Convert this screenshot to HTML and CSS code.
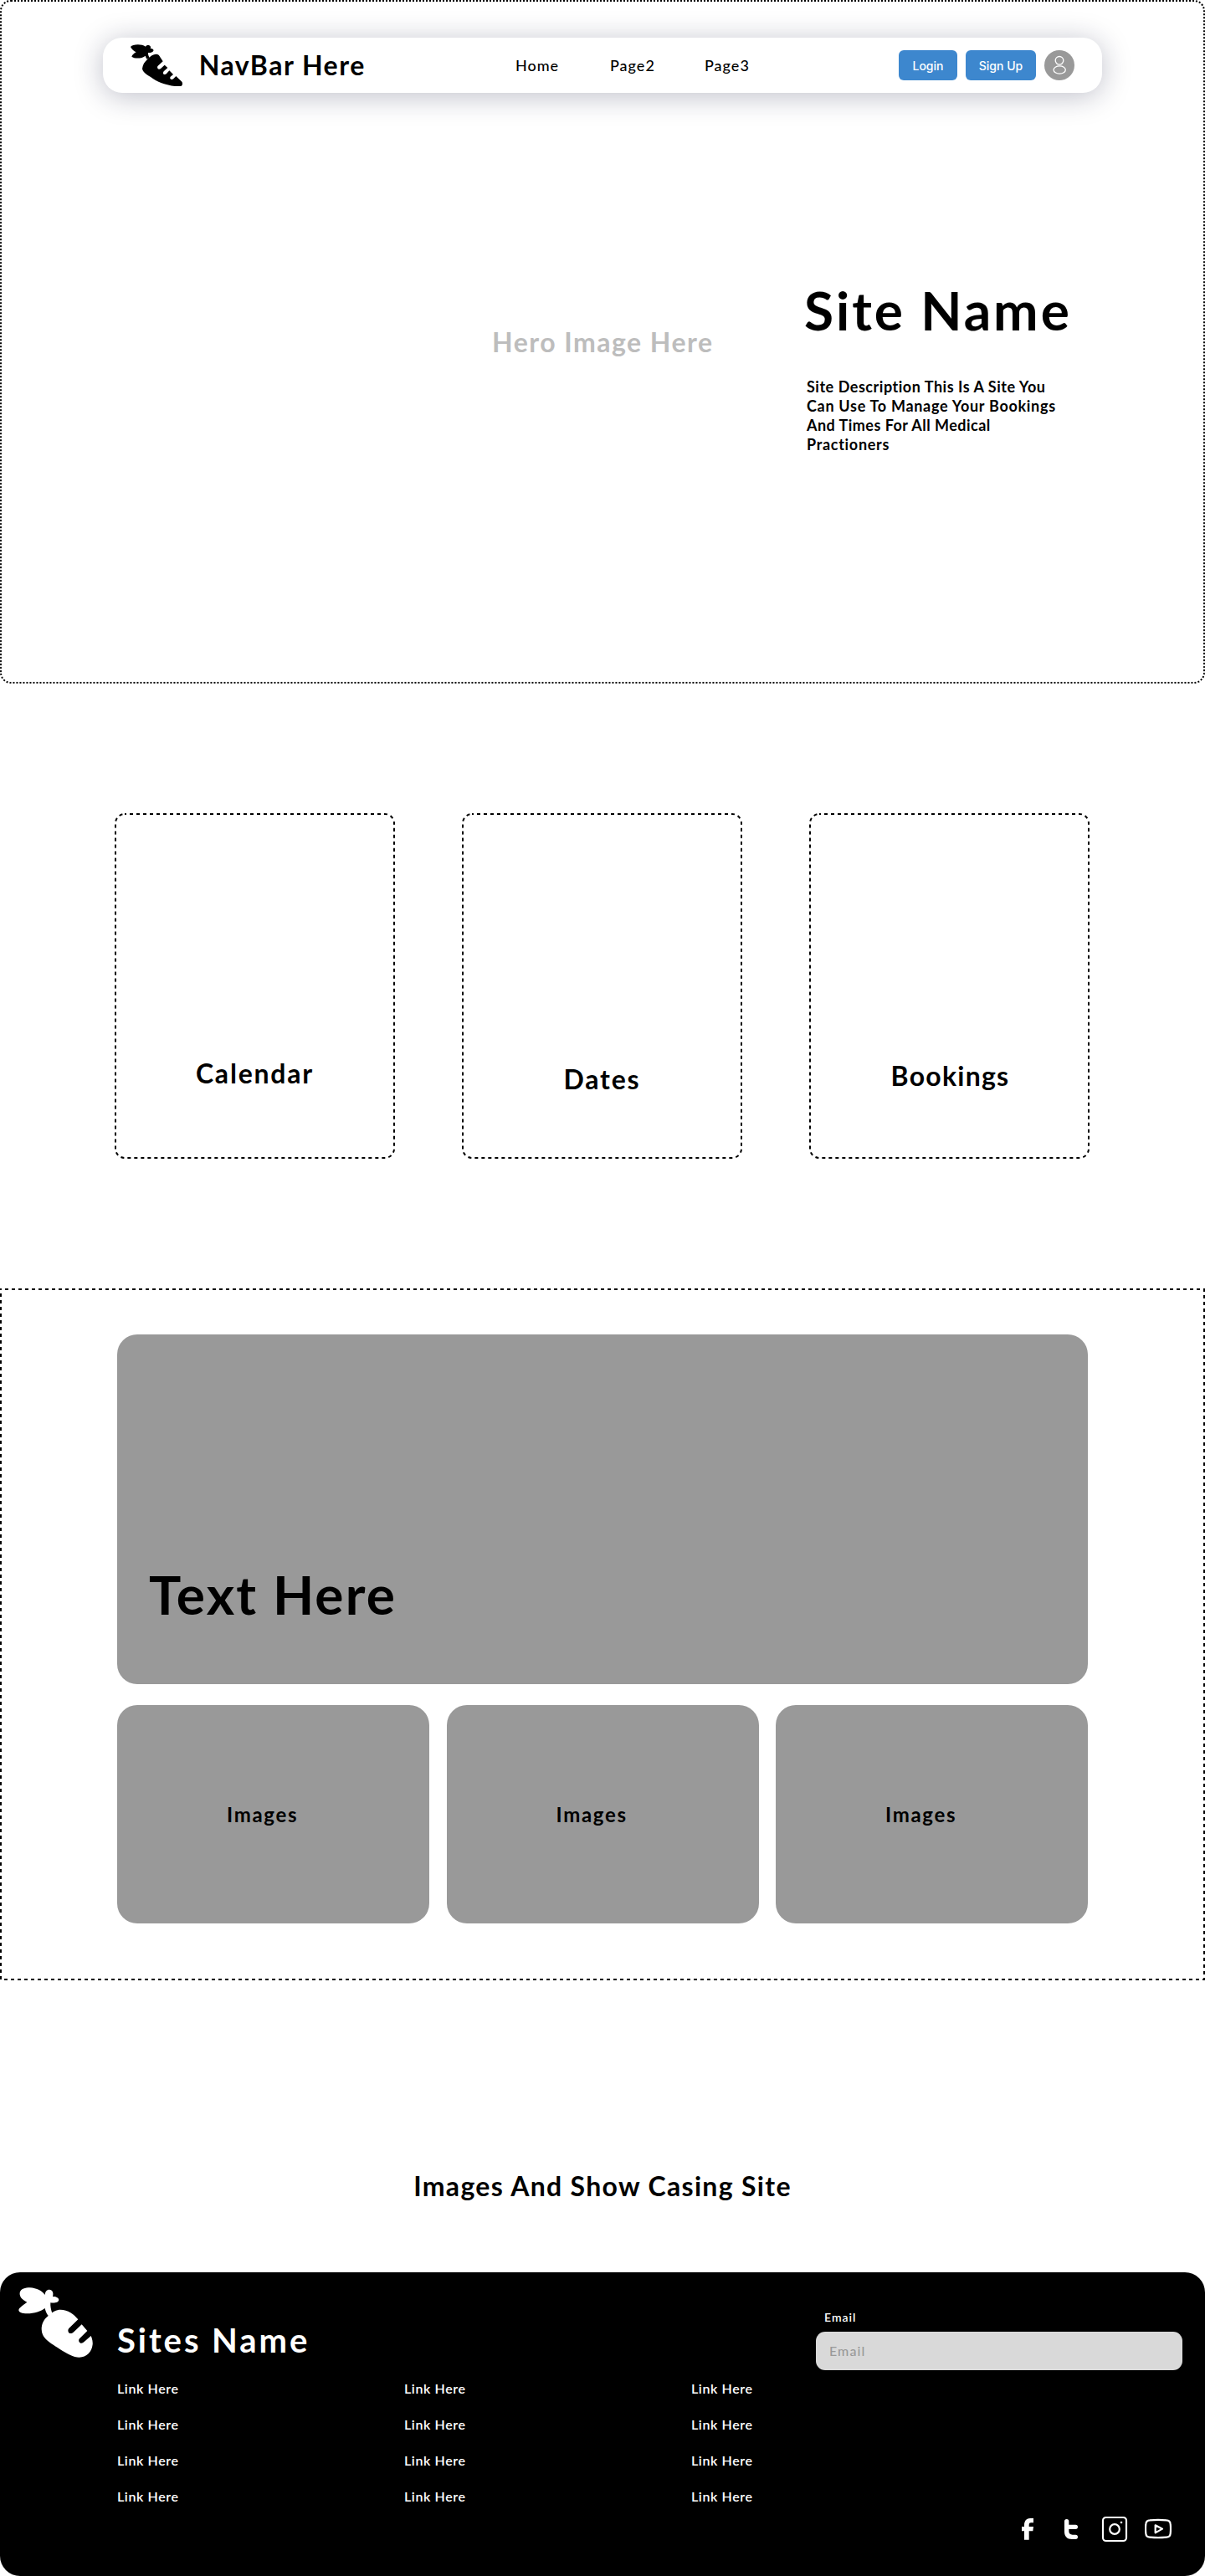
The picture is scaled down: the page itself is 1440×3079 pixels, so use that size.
FILE: index.html
```html
<!DOCTYPE html>
<html lang="en">
<head>
<meta charset="utf-8">
<title>Site Name</title>
<link rel="stylesheet" href="styles.css">
</head>
<body>
<header class="hero">
  <svg class="outline" width="1440" height="817" aria-hidden="true"><rect x="1" y="1" width="1438" height="815" rx="12" stroke-dasharray="2 2"/></svg>
  <nav class="navbar">
    <div class="brand">
      <svg class="brand-logo" viewBox="168 98 188 152" aria-hidden="true">
        <path d="M168 107C175 98 205 95 222 106C224 101 234 99 239 105C241 109 240 112 238 114C244 111 252 116 250 121C248 126 238 129 231 128C230 135 234 142 236 147L227 151C223 146 222 142 221 139C210 149 183 151 172 142C174 136 181 130 188 126C180 122 172 116 168 107Z"/>
        <path d="M228 152C240 139 250 133 259 133C267 133 272 138 275 145L284 159L266 175C262 180 265 187 270 187C273 187 275 186 277 184L290 172L301 182L287 195C283 200 285 206 290 206C293 206 295 205 297 203L307 192L321 206L311 214C308 218 310 224 315 224C318 224 320 223 322 221L331 212L352 232C356 238 354 248 345 249C310 249 265 236 240 215C222 205 211 195 210 185C212 170 218 162 228 152Z"/>
      </svg>
      <span class="brand-name">NavBar Here</span>
    </div>
    <div class="nav-links"><a>Home</a><a>Page2</a><a>Page3</a></div>
    <div class="nav-actions">
      <button class="btn btn-login">Login</button>
      <button class="btn btn-signup">Sign Up</button>
      <svg class="avatar" viewBox="0 0 36 36" aria-hidden="true"><circle class="avatar-bg" cx="18" cy="18" r="18"/><circle cx="18" cy="12.3" r="4.8"/><ellipse cx="18.2" cy="23.5" rx="7.1" ry="4.6"/></svg>
    </div>
  </nav>
  <div class="hero-body">
    <p class="hero-label">Hero Image Here</p>
    <div class="hero-copy">
      <h1>Site Name</h1>
      <p class="description"><span class="tight">Site Description This Is A Site You</span><br>Can Use To Manage Your Bookings<br><span class="tighter">And Times For All Medical</span><br>Practioners</p>
    </div>
  </div>
</header>

<section class="features">
  <article class="feature calendar"><svg class="outline" width="335" height="413" aria-hidden="true"><rect x="1" y="1" width="333" height="411" rx="11" stroke-dasharray="4 4" stroke-dashoffset="2"/></svg><h2>Calendar</h2></article>
  <article class="feature dates"><svg class="outline" width="335" height="413" aria-hidden="true"><rect x="1" y="1" width="333" height="411" rx="11" stroke-dasharray="4 4" stroke-dashoffset="2"/></svg><h2>Dates</h2></article>
  <article class="feature bookings"><svg class="outline" width="335" height="413" aria-hidden="true"><rect x="1" y="1" width="333" height="411" rx="11" stroke-dasharray="4 4" stroke-dashoffset="2"/></svg><h2>Bookings</h2></article>
</section>

<section class="gallery">
  <svg class="outline" width="1440" height="827" aria-hidden="true"><rect x="1" y="1" width="1438" height="825" stroke-dasharray="4 4" stroke-dashoffset="3"/></svg>
  <div class="banner"><h2>Text Here</h2></div>
  <div class="tiles">
    <div class="tile">Images</div>
    <div class="tile">Images</div>
    <div class="tile">Images</div>
  </div>
</section>

<h2 class="showcase">Images And Show Casing Site</h2>

<footer class="footer">
  <svg class="footer-logo" viewBox="67 133 267 252" aria-hidden="true">
    <path d="M98 186C80 178 70 166 72 152C75 138 92 134 108 134C133 135 153 147 162 160C163 148 168 141 178 141C189 142 194 152 190 166C202 165 212 171 212 178C211 187 198 190 182 188C181 202 184 213 187 222L187 230L174 235C167 227 164 216 162 208C148 218 125 227 98 227C80 227 69 223 68 215C68 206 85 196 98 186Z"/>
    <path d="M174 235C190 219 203 213 218 213C244 213 267 230 281 248L248 280C243 285 245 294 250 297C254 299 260 298 264 294L294 266L314 289L286 317C281 323 284 331 290 333C295 334 299 332 302 329L327 307C332 318 334 328 333 338C330 365 312 384 285 384C265 384 240 370 215 354C185 334 150 318 150 283C150 262 160 246 174 235Z"/>
  </svg>
  <div class="footer-main">
    <h2>Sites Name</h2>
    <div class="footer-links">
      <a>Link Here</a><a>Link Here</a><a>Link Here</a>
      <a>Link Here</a><a>Link Here</a><a>Link Here</a>
      <a>Link Here</a><a>Link Here</a><a>Link Here</a>
      <a>Link Here</a><a>Link Here</a><a>Link Here</a>
    </div>
  </div>
  <div class="footer-side">
    <label for="email">Email</label>
    <input id="email" type="email" placeholder="Email">
    <div class="social">
      <svg viewBox="816 921 96 96"><path d="M852 1007V976H843V960H852V955C852 938 861 930 873 930H885V946H876Q869 946 869 953V960H885L883 976H869V1007Z"/></svg>
      <svg viewBox="972 921 96 96"><path d="M996 941A8 8 0 0 1 1012 941V953H1036A8 8 0 0 1 1036 969H1012V976Q1012 989 1025 989H1036A8 8 0 0 1 1036 1005H1024C1005 1005 996 995 996 978Z"/></svg>
      <svg class="line" viewBox="1128 921 96 96"><rect x="1134" y="927" width="84" height="84" rx="11"/><circle cx="1176" cy="969" r="17.5"/><circle class="dot" cx="1200" cy="945" r="4"/></svg>
      <svg class="line" viewBox="1284 921 96 96"><path d="M1302 937Q1332 934 1362 937Q1375 938 1376 950Q1378 968 1376 985Q1375 997 1362 998Q1332 1001 1302 998Q1289 997 1288 985Q1286 968 1288 950Q1289 938 1302 937Z"/><path d="M1322 955L1347 968L1322 982Z"/></svg>
    </div>
  </div>
</footer>
</body>
</html>
```
FILE: styles.css
```css
* { box-sizing: border-box; margin: 0; padding: 0; }

body {
  width: 1440px;
  background: #fff;
  color: #000;
  font-family: Lato, "Open Sans", sans-serif;
  font-weight: 700;
}

h1, h2 { font-weight: 700; white-space: nowrap; }

/* Dashed frames */
.outline { position: absolute; inset: 0; pointer-events: none; }
.outline rect { fill: none; stroke: #000; stroke-width: 2; }

/* Hero */
.hero { position: relative; height: 817px; padding: 45px 123px 0; }

.navbar {
  display: grid;
  grid-template-columns: 493px 1fr auto;
  align-items: center;
  height: 66px;
  padding-right: 33px;
  border-radius: 23px;
  background: #fff;
  box-shadow: 0 4px 34px rgba(20, 25, 60, 0.28);
}

.brand { display: flex; align-items: center; gap: 19px; padding-left: 33px; }
.brand-logo { width: 62.7px; height: 50.7px; }
.brand-name { font-size: 32px; line-height: 38px; letter-spacing: 1.5px; }

.nav-links { display: flex; }
.nav-links a { width: 113px; font-size: 18px; font-weight: 500; letter-spacing: 1px; }

.nav-actions { display: flex; gap: 10px; }
.btn {
  height: 36px;
  border: 0;
  border-radius: 6px;
  background: #3d87ce;
  color: #fff;
  font: 500 14px Inter, sans-serif;
}
.btn-login { width: 70px; }
.btn-signup { width: 84px; }
.avatar { width: 36px; height: 36px; fill: none; stroke: #fff; stroke-width: 1.3; }
.avatar-bg { fill: #999; stroke: none; }

.hero-body { display: grid; grid-template-columns: 373px 1fr; padding-left: 465px; }
.hero-label {
  padding-top: 279px;
  color: #bdbdbd;
  font-size: 32px;
  line-height: 38px;
  letter-spacing: 1.47px;
}
.hero-copy { padding-top: 228px; }
.hero-copy h1 { font-size: 64px; line-height: 64px; letter-spacing: 2.95px; }
.description {
  margin-top: 48px;
  padding-left: 3px;
  font-size: 18px;
  line-height: 23px;
  letter-spacing: 0.7px;
  white-space: nowrap;
}
.tight { letter-spacing: 0.53px; }
.tighter { letter-spacing: 0.47px; }

/* Feature cards */
.features { display: flex; gap: 80px; margin-top: 155px; padding-left: 137px; }
.feature { position: relative; width: 335px; height: 413px; text-align: center; }
.feature h2 { font-size: 32px; line-height: 38px; letter-spacing: 1.8px; }
.calendar { padding-top: 292px; }
.dates { padding-top: 299px; }
.bookings { padding-top: 295px; }
.bookings h2 { letter-spacing: 1.25px; padding-left: 2px; }

/* Gallery */
.gallery { position: relative; height: 827px; margin-top: 155px; padding: 55px 140px 0; }
.banner {
  height: 418px;
  padding: 273px 0 0 38px;
  border-radius: 24px;
  background: #999;
}
.banner h2 { font-size: 64px; line-height: 76px; letter-spacing: 2.15px; }
.tiles { display: grid; grid-template-columns: 373px 373px 373px; justify-content: space-between; margin-top: 25px; }
.tile {
  height: 261px;
  padding: 117px 0 0 131px;
  border-radius: 24px;
  background: #999;
  font-size: 24px;
  line-height: 28px;
  letter-spacing: 1.7px;
}

.showcase {
  margin: 227px 0 84px;
  font-size: 32px;
  line-height: 38px;
  letter-spacing: 1.32px;
  text-align: center;
}

/* Footer */
.footer {
  display: grid;
  grid-template-columns: 140px 835px 438px;
  height: 363px;
  border-radius: 24px;
  background: #000;
  color: #fff;
}
.footer-logo { width: 89px; height: 84px; margin: 18px 0 0 22px; fill: #fff; }
.footer-main { padding-top: 57px; }
.footer-main h2 { font-size: 40px; line-height: 48px; letter-spacing: 2.95px; }
.footer-links { display: grid; grid-template-columns: repeat(3, 343px); margin-top: 12px; }
.footer-links a { font-size: 16px; font-weight: 600; line-height: 43px; letter-spacing: 0.6px; }

.footer-side { display: flex; flex-direction: column; padding: 43.5px 0 40px; }
.footer-side label {
  padding-left: 10px;
  font-size: 14px;
  font-weight: 600;
  line-height: 20px;
  letter-spacing: 1px;
}
.footer-side input {
  height: 46px;
  margin-top: 7.5px;
  padding: 0 16px 1px;
  border: 0;
  border-radius: 11px;
  background: #d9d9d9;
  font: 500 16px Lato, sans-serif;
  letter-spacing: 1.1px;
}
.footer-side input::placeholder { color: #999; opacity: 1; }

.social { display: flex; justify-content: flex-end; gap: 20px; margin-top: auto; padding-right: 13px; }
.social svg { width: 32px; height: 32px; fill: #fff; }
.social .line { fill: none; stroke: #fff; stroke-width: 6.5; stroke-linejoin: round; }
.social .dot { fill: #fff; stroke: none; }
```
